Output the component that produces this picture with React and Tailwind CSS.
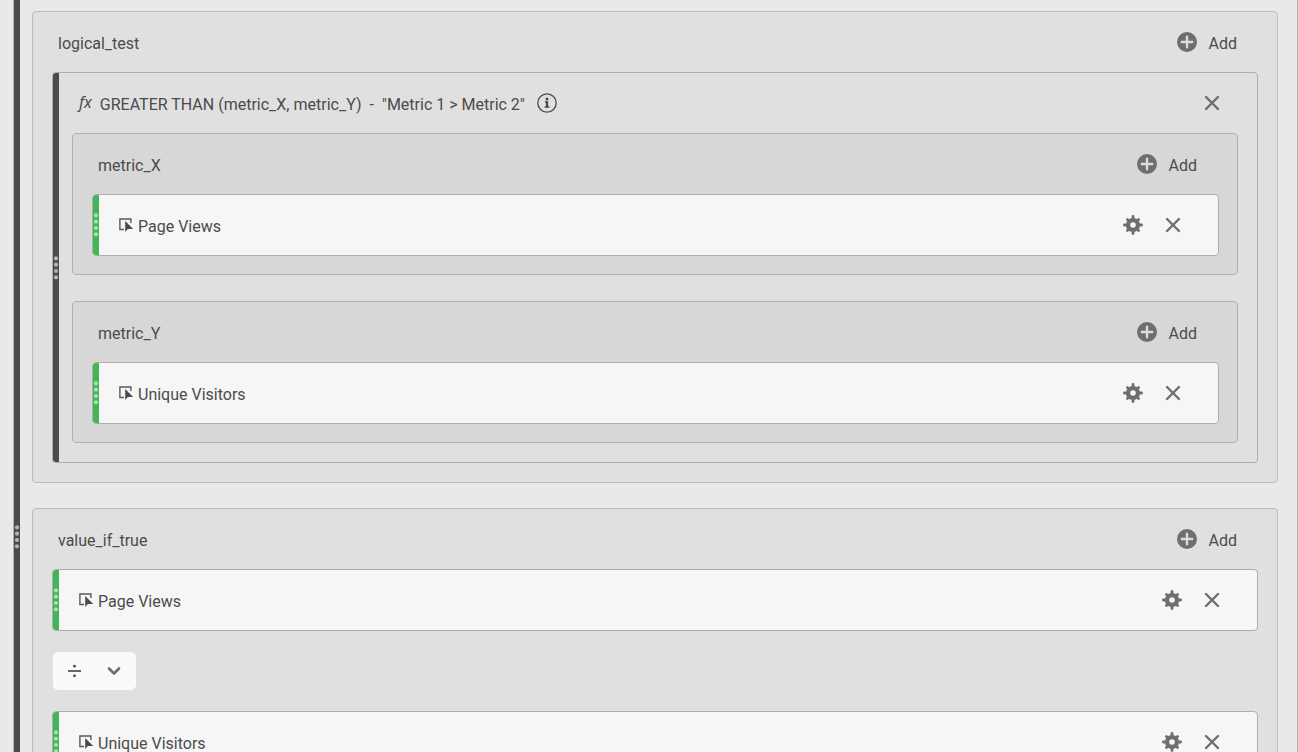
import React, { useState } from "react";

const DragDots = ({ className }) => (
  <svg
    width="6"
    height="24"
    viewBox="0 0 6 24"
    fill="currentColor"
    className={className}
    aria-hidden="true"
  >
    <circle cx="3" cy="2.4" r="2.1" />
    <circle cx="3" cy="8.7" r="2.1" />
    <circle cx="3" cy="15" r="2.1" />
    <circle cx="3" cy="21.3" r="2.1" />
  </svg>
);

const AddIcon = () => (
  <svg width="20" height="20" viewBox="0 0 20 20" aria-hidden="true">
    <circle cx="10" cy="10" r="10" fill="#6e6e6e" />
    <path
      d="M10 4.8v10.4M4.8 10h10.4"
      stroke="#dcdcdc"
      strokeWidth="2.4"
      strokeLinecap="round"
    />
  </svg>
);

const CloseIcon = () => (
  <svg width="16" height="16" viewBox="0 0 16 16" aria-hidden="true">
    <path
      d="M2 2l12 12M14 2L2 14"
      stroke="#6e6e6e"
      strokeWidth="2.4"
      strokeLinecap="round"
    />
  </svg>
);

const GearIcon = () => (
  <svg width="20" height="20" viewBox="0 0 20 20" aria-hidden="true">
    <path
      d="M10 1.4v17.2M1.4 10h17.2M4.4 4.4l11.2 11.2M15.6 4.4L4.4 15.6"
      stroke="#6e6e6e"
      strokeWidth="2.8"
      strokeLinecap="round"
    />
    <circle cx="10" cy="10" r="7.1" fill="#6e6e6e" />
    <circle cx="10" cy="10" r="2.8" fill="#f6f6f6" />
  </svg>
);

const InfoIcon = () => (
  <svg width="20" height="20" viewBox="0 0 20 20" fill="none" aria-hidden="true">
    <circle cx="10" cy="10" r="9.2" stroke="#4b4b4b" strokeWidth="1.3" />
    <circle cx="10" cy="6" r="1.5" fill="#4b4b4b" />
    <path d="M8 9h1.6M7.6 14h4.8" stroke="#4b4b4b" strokeWidth="1.4" />
    <path d="M10 8.3v6" stroke="#4b4b4b" strokeWidth="2.2" />
  </svg>
);

const MetricIcon = () => (
  <svg width="15" height="14" viewBox="0 0 15 14" aria-hidden="true">
    <path
      d="M5 11.5H.9V1h11v4"
      fill="none"
      stroke="#5a5a5a"
      strokeWidth="1.4"
    />
    <path d="M6.2 3v11l2.7-2.9h5.3z" fill="#4b4b4b" />
  </svg>
);

const AddButton = () => (
  <button type="button" className="flex items-center gap-3">
    <AddIcon />
    <span className="pt-[3px]">Add</span>
  </button>
);

const CloseButton = () => (
  <button type="button" aria-label="Remove">
    <CloseIcon />
  </button>
);

const Metric = ({ name }) => (
  <div className="flex h-[62px] rounded border border-[#aeaeae] bg-[#f6f6f6] overflow-hidden">
    <div className="w-1.5 shrink-0 flex items-center bg-[#44b556]">
      <DragDots className="text-[#a5e0ae]" />
    </div>
    <div className="flex-1 flex items-center justify-between pl-5 pr-[37px]">
      <div className="flex items-center gap-1">
        <MetricIcon />
        <span className="pt-[3px]">{name}</span>
      </div>
      <div className="flex items-center gap-[22px]">
        <button type="button" aria-label="Settings">
          <GearIcon />
        </button>
        <CloseButton />
      </div>
    </div>
  </div>
);

const Header = ({ title }) => (
  <div className="h-[60px] flex items-center justify-between pl-[25px] pr-10">
    <span className="pt-[3px]">{title}</span>
    <AddButton />
  </div>
);

const Param = ({ title, metric }) => (
  <section className="rounded border border-[#b1b1b1] bg-[#d7d7d7]">
    <Header title={title} />
    <div className="pl-[19px] pr-[18px] pb-[18px]">
      <Metric name={metric} />
    </div>
  </section>
);

const Panel = ({ title, children }) => (
  <section className="rounded border border-[#bcbcbc] bg-[#e0e0e0]">
    <Header title={title} />
    <div className="px-[19px] pb-[19px]">{children}</div>
  </section>
);

const Operator = () => {
  const [open, setOpen] = useState(false);

  return (
    <button
      type="button"
      aria-label="Operator"
      aria-expanded={open}
      onClick={() => setOpen(!open)}
      className="my-5 flex h-10 w-[85px] items-center justify-between rounded-md border border-transparent bg-[#fafafa] bg-clip-padding px-[15px]"
    >
      <svg width="13" height="14" viewBox="0 0 13 14" aria-hidden="true">
        <path d="M0 7h13" stroke="#4b4b4b" strokeWidth="1.7" />
        <circle cx="6.5" cy="2.2" r="1.4" fill="#4b4b4b" />
        <circle cx="6.5" cy="11.8" r="1.4" fill="#4b4b4b" />
      </svg>
      <svg width="14" height="10" viewBox="0 0 14 10" fill="none" aria-hidden="true">
        <path
          d="M2 2.5l5 5 5-5"
          stroke="#6e6e6e"
          strokeWidth="2.6"
          strokeLinecap="round"
          strokeLinejoin="round"
        />
      </svg>
    </button>
  );
};

const App = () => {
  return (
    <main className="h-screen overflow-hidden bg-[#e9e9e9] font-['Roboto','Noto_Sans',sans-serif] text-[16px] leading-5 text-[#4b4b4b]">
      <div className="ml-[13px] flex min-h-[1073px] border-x border-[#b1b1b1]">
        <div className="w-1.5 shrink-0 flex items-center bg-[#4b4b4b]">
          <DragDots className="text-[#b4b4b4]" />
        </div>
        <div className="flex-1 flex flex-col gap-[25px] pt-[11px] pl-3 pr-[19px]">
          <Panel title="logical_test">
            <div className="flex rounded border border-[#aeaeae] overflow-hidden">
              <div className="w-1.5 shrink-0 flex items-center bg-[#4b4b4b]">
                <DragDots className="text-[#b4b4b4]" />
              </div>
              <div className="flex-1">
                <div className="h-[60px] flex items-center justify-between pl-5 pr-[37px]">
                  <div className="flex items-center">
                    <i className="pr-2 pb-[3px] font-['Noto_Sans',sans-serif]">fx</i>
                    <span className="pt-[3px] pr-3 whitespace-pre">
                      {'GREATER THAN (metric_X, metric_Y)  -  "Metric 1 > Metric 2"'}
                    </span>
                    <button type="button" aria-label="Info">
                      <InfoIcon />
                    </button>
                  </div>
                  <CloseButton />
                </div>
                <div className="flex flex-col gap-[26px] pl-[13px] pr-[19px] pb-[19px]">
                  <Param title="metric_X" metric="Page Views" />
                  <Param title="metric_Y" metric="Unique Visitors" />
                </div>
              </div>
            </div>
          </Panel>
          <Panel title="value_if_true">
            <Metric name="Page Views" />
            <Operator />
            <Metric name="Unique Visitors" />
          </Panel>
        </div>
      </div>
    </main>
  );
};

export default App;
